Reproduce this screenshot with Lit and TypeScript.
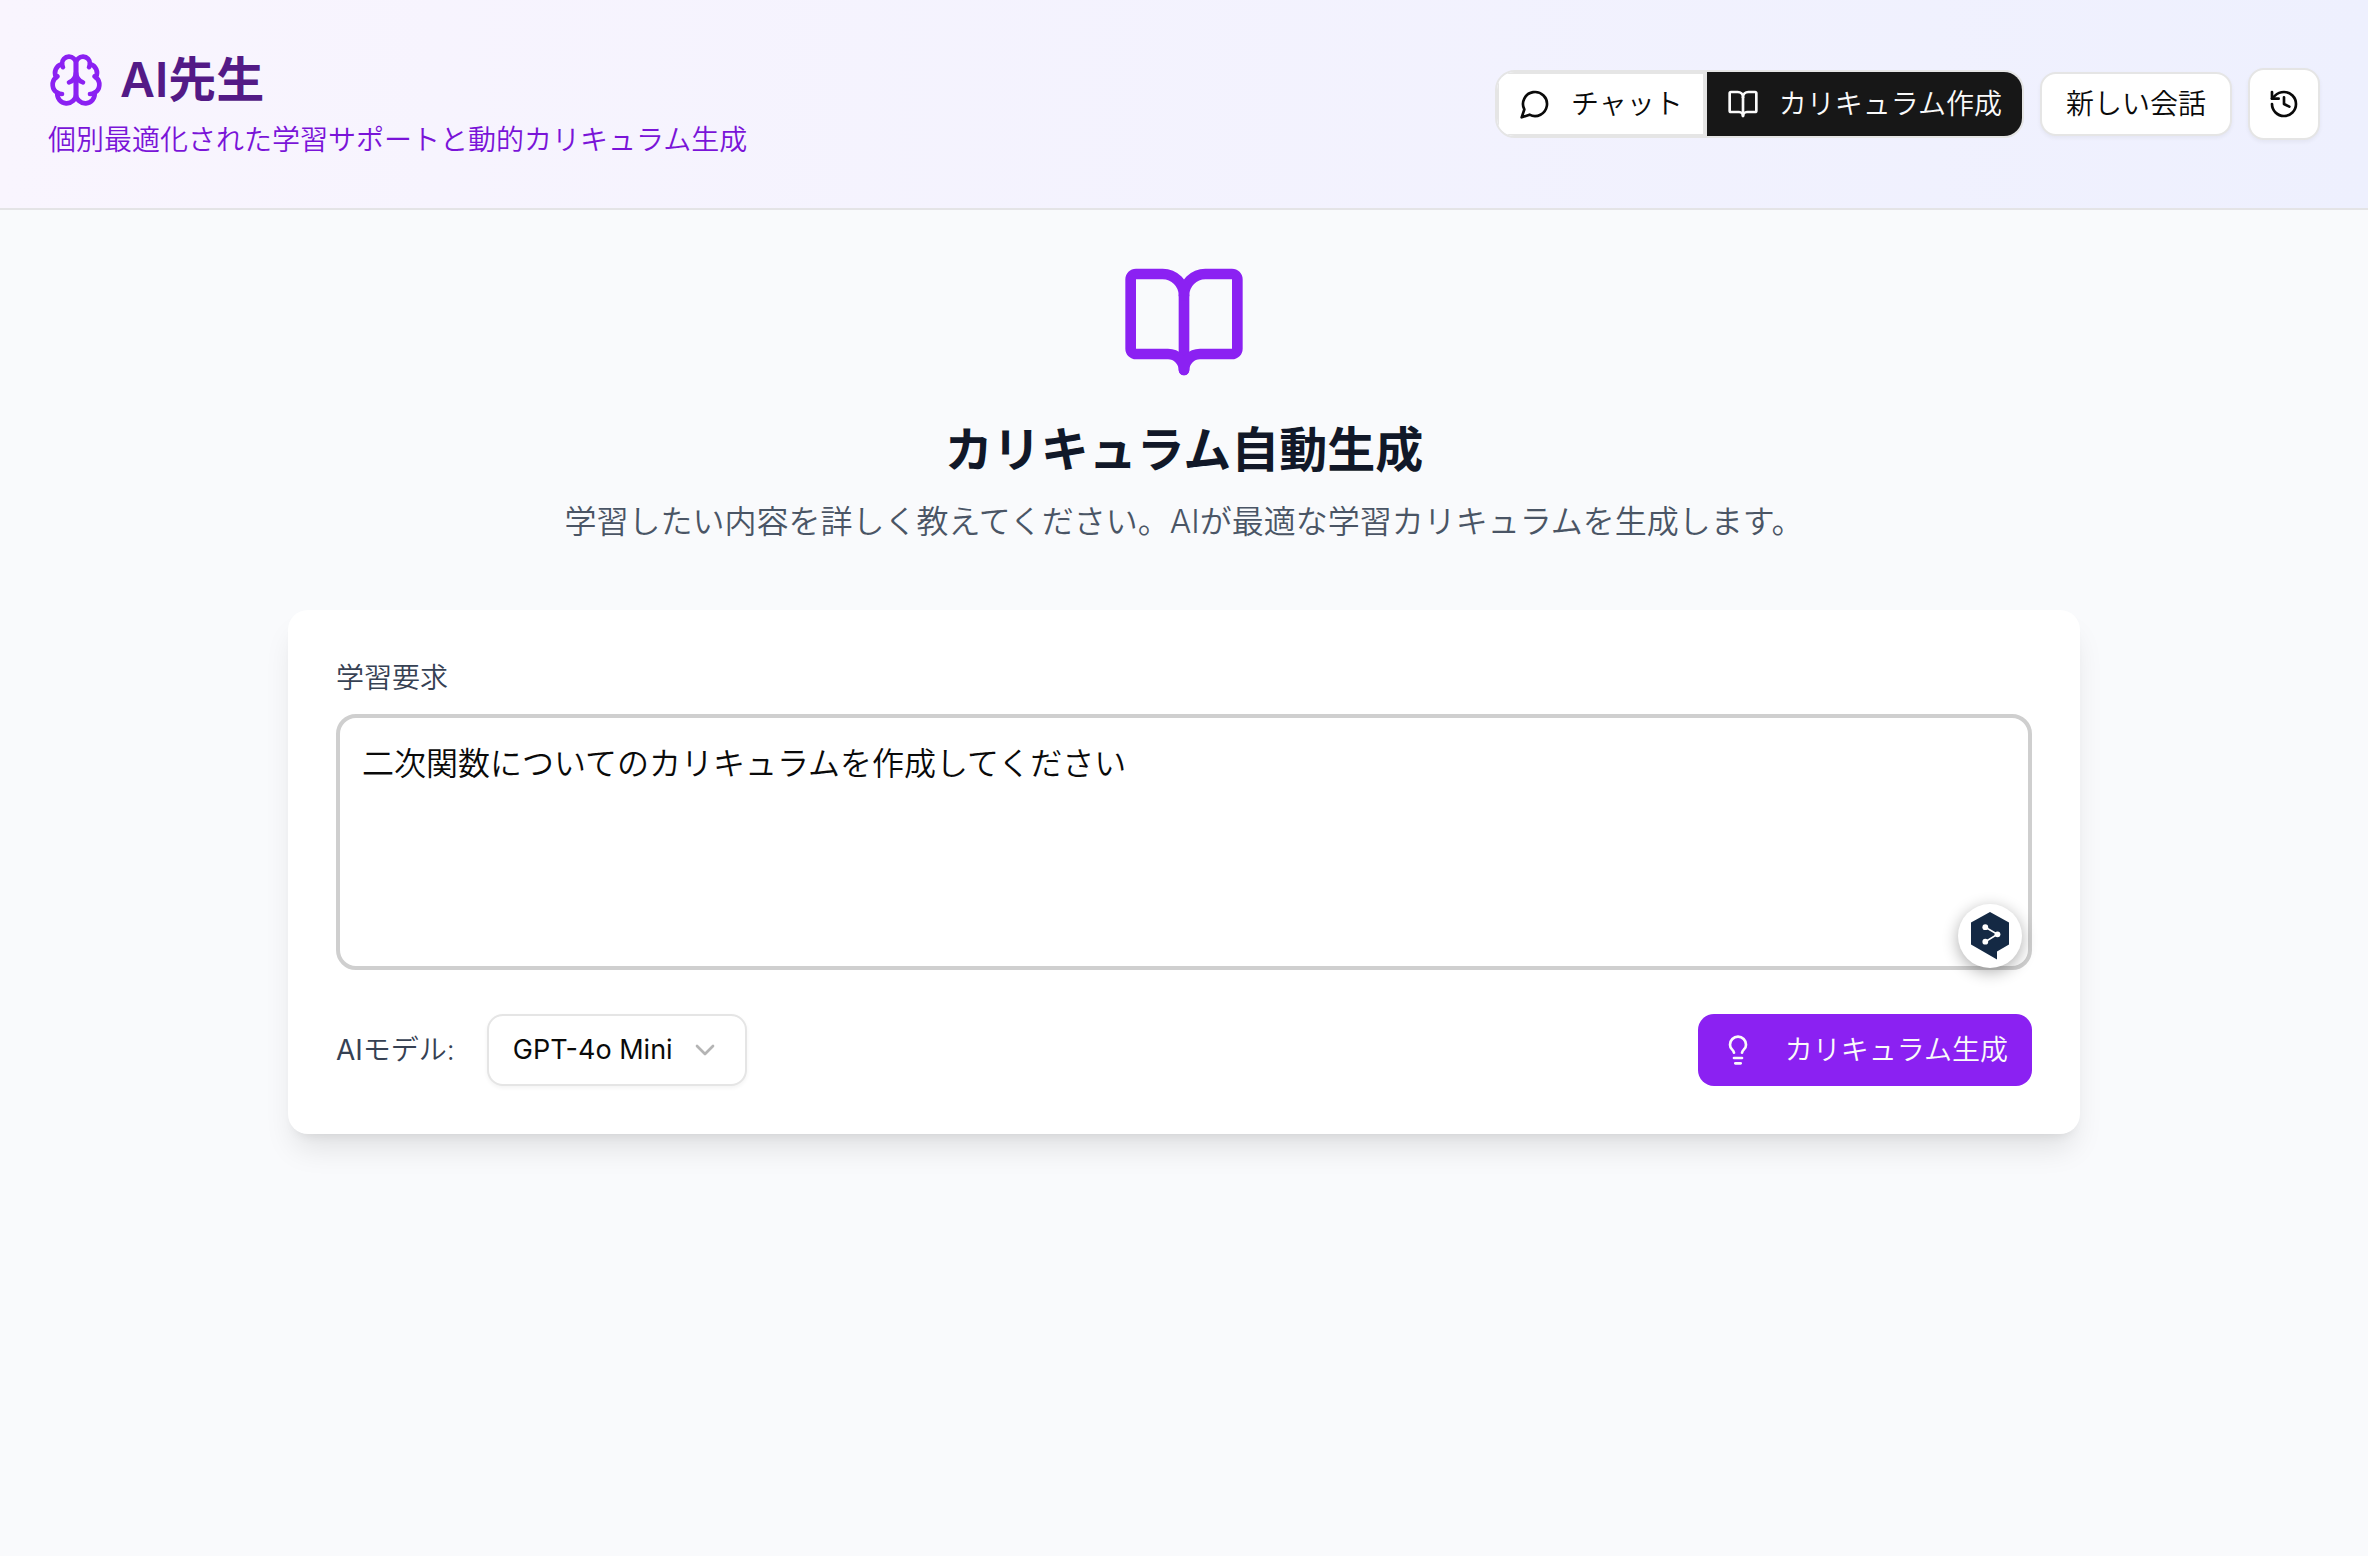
import { LitElement, html, css, svg } from "lit";
import { customElement, state } from "lit/decorators.js";

type View = "chat" | "curriculum";

const ICONS = {
  brain: svg`
    <path d="M12 5a3 3 0 1 0-5.997.125 4 4 0 0 0-2.526 5.77 4 4 0 0 0 .556 6.588A4 4 0 1 0 12 18Z"/>
    <path d="M12 5a3 3 0 1 1 5.997.125 4 4 0 0 1 2.526 5.77 4 4 0 0 1-.556 6.588A4 4 0 1 1 12 18Z"/>
    <path d="M15 13a4.5 4.5 0 0 1-3-4 4.5 4.5 0 0 1-3 4"/>
    <path d="M17.599 6.5a3 3 0 0 0 .399-1.375"/>
    <path d="M6.003 5.125A3 3 0 0 0 6.401 6.5"/>
    <path d="M3.477 10.896a4 4 0 0 1 .585-.396"/>
    <path d="M19.938 10.5a4 4 0 0 1 .585.396"/>
    <path d="M6 18a4 4 0 0 1-1.967-.516"/>
    <path d="M19.967 17.484A4 4 0 0 1 18 18"/>`,
  message: svg`<path d="M7.9 20A9 9 0 1 0 4 16.1L2 22Z"/>`,
  book: svg`
    <path d="M12 7v14"/>
    <path d="M3 18a1 1 0 0 1-1-1V4a1 1 0 0 1 1-1h5a4 4 0 0 1 4 4 4 4 0 0 1 4-4h5a1 1 0 0 1 1 1v13a1 1 0 0 1-1 1h-6a3 3 0 0 0-3 3 3 3 0 0 0-3-3z"/>`,
  history: svg`
    <path d="M3 12a9 9 0 1 0 9-9 9.75 9.75 0 0 0-6.74 2.74L3 8"/>
    <path d="M3 3v5h5"/>
    <path d="M12 7v5l4 2"/>`,
  chevron: svg`<path d="m6 9 6 6 6-6"/>`,
  bulb: svg`
    <path d="M15 14c.2-1 .7-1.7 1.5-2.5 1-.9 1.5-2.2 1.5-3.5A6 6 0 0 0 6 8c0 1 .2 2.2 1.5 3.5.7.7 1.3 1.5 1.5 2.5"/>
    <path d="M9 18h6"/>
    <path d="M10 22h4"/>`,
};

const icon = (name: keyof typeof ICONS, cls = "icon") => html`
  <svg class=${cls} viewBox="0 0 24 24" aria-hidden="true">${ICONS[name]}</svg>
`;

@customElement("app-root")
export class AppRoot extends LitElement {
  @state() private view: View = "curriculum";
  @state() private request = "二次関数についてのカリキュラムを作成してください";

  static styles = css`
    :host {
      display: flex;
      flex-direction: column;
      min-height: 100vh;
      box-sizing: border-box;
      background: #f9fafc;
      color: #0a0a0a;
      font-family: Inter, "Noto Sans CJK JP", sans-serif;
      font-size: 28px;
      line-height: 40px;
      font-weight: 350;
    }
    *, *::before, *::after { box-sizing: border-box; }
    h1, h2, p { margin: 0; }
    button, select, textarea { font: inherit; color: inherit; margin: 0; }
    button { cursor: pointer; white-space: nowrap; }

    .icon, .brand-icon, .hero-icon, .chevron {
      display: block;
      flex: none;
      width: 32px;
      height: 32px;
      fill: none;
      stroke: currentColor;
      stroke-width: 2;
      stroke-linecap: round;
      stroke-linejoin: round;
    }

    .header {
      display: flex;
      align-items: center;
      justify-content: space-between;
      gap: 32px;
      padding: 48px;
      border-bottom: 2px solid #e4e4e6;
      background: linear-gradient(to right, #f9f5fe, #eef0fe);
    }
    .brand { display: flex; flex-direction: column; gap: 8px; }
    .title {
      display: flex;
      align-items: center;
      gap: 16px;
      font-size: 48px;
      line-height: 64px;
      font-weight: 600;
      color: #531a86;
    }
    .brand-icon { width: 56px; height: 56px; color: #8b21f2; }
    .subtitle { color: #7a14d8; }

    .actions { display: flex; align-items: center; gap: 16px; }
    .tabs {
      display: flex;
      border: 2px solid #e5e5e5;
      border-radius: 20px;
      overflow: hidden;
    }
    .tab {
      display: flex;
      align-items: center;
      gap: 20px;
      height: 64px;
      padding: 0 20px;
      border: 2px solid #e5e5e5;
      background: #fff;
    }
    .tab.active {
      border-width: 0 0 0 2px;
      background: #171717;
      color: #fafafa;
    }
    .outline {
      display: flex;
      align-items: center;
      justify-content: center;
      height: 64px;
      padding: 0 24px;
      border: 2px solid #e5e5e5;
      border-radius: 16px;
      background: #fff;
      box-shadow: 0 2px 4px rgb(0 0 0 / 5%);
    }
    .square { width: 72px; height: 72px; padding: 0; }

    .main {
      display: flex;
      flex-direction: column;
      gap: 64px;
      width: 100%;
      max-width: 1888px;
      margin: 0 auto;
      padding: 48px;
    }
    .hero { display: flex; flex-direction: column; align-items: center; text-align: center; }
    .hero-icon { width: 128px; height: 128px; margin-bottom: 32px; color: #8b21f2; }
    .heading { font-size: 48px; line-height: 64px; font-weight: 600; color: #111828; margin-bottom: 16px; }
    .lead { font-size: 32px; line-height: 48px; color: #4a5565; }

    .card {
      padding: 48px;
      border-radius: 20px;
      background: #fff;
      box-shadow: 0 20px 30px -6px rgb(0 0 0 / 10%), 0 8px 12px -8px rgb(0 0 0 / 10%);
    }
    .label { color: #364153; }
    .latin { font-weight: 400; }
    .field { position: relative; margin: 16px 0 44px; }
    .textarea {
      display: block;
      width: 100%;
      height: 256px;
      padding: 22px;
      border: 4px solid #cfcfcf;
      border-radius: 20px;
      outline: none;
      resize: none;
      background: #fff;
      font-size: 32px;
      line-height: 48px;
    }
    .assist {
      position: absolute;
      right: 10px;
      bottom: 2px;
      width: 64px;
      height: 64px;
      padding: 0;
      border: 0;
      border-radius: 50%;
      background: #fff;
      box-shadow: 0 4px 16px rgb(0 0 0 / 32%);
    }
    .assist-mark { display: block; width: 64px; height: 64px; }

    .row { display: flex; align-items: center; justify-content: space-between; gap: 32px; }
    .model { display: flex; align-items: center; gap: 32px; }
    .select-wrap { display: grid; align-items: center; }
    .select-wrap > * { grid-area: 1 / 1; }
    .select {
      appearance: none;
      height: 72px;
      padding: 0 72px 0 24px;
      border: 2px solid #e5e5e5;
      border-radius: 16px;
      background: #fff;
      box-shadow: 0 2px 4px rgb(0 0 0 / 5%);
      font-size: 27px;
      font-weight: 400;
    }
    .chevron { justify-self: end; margin-right: 26px; color: #b4b4b4; pointer-events: none; }
    .primary {
      display: flex;
      align-items: center;
      gap: 31px;
      height: 72px;
      padding: 0 24px;
      border: 0;
      border-radius: 16px;
      background: #8b21f2;
      color: #fafafa;
    }
  `;

  private tab(view: View, glyph: keyof typeof ICONS, label: string) {
    const active = this.view === view;
    return html`
      <button class="tab ${active ? "active" : ""}" aria-pressed=${active} @click=${() => (this.view = view)}>
        ${icon(glyph)}<span>${label}</span>
      </button>
    `;
  }

  render() {
    return html`
      <header class="header">
        <div class="brand">
          <h1 class="title">${icon("brain", "brand-icon")}<span>AI先生</span></h1>
          <p class="subtitle">個別最適化された学習サポートと動的カリキュラム生成</p>
        </div>
        <div class="actions">
          <div class="tabs">
            ${this.tab("chat", "message", "チャット")}
            ${this.tab("curriculum", "book", "カリキュラム作成")}
          </div>
          <button class="outline">新しい会話</button>
          <button class="outline square">${icon("history")}</button>
        </div>
      </header>

      <main class="main">
        <section class="hero">
          ${icon("book", "hero-icon")}
          <h2 class="heading">カリキュラム自動生成</h2>
          <p class="lead">学習したい内容を詳しく教えてください。AIが最適な学習カリキュラムを生成します。</p>
        </section>

        <section class="card">
          <label class="label" for="request">学習要求</label>
          <div class="field">
            <textarea
              id="request"
              class="textarea"
              .value=${this.request}
              @input=${(e: Event) => (this.request = (e.target as HTMLTextAreaElement).value)}
            ></textarea>
            <button class="assist">
              <svg class="assist-mark" viewBox="0 0 64 64" aria-hidden="true">
                <path fill="#142944" d="M32 8 51 18.500V40.500L39 47.500V55.500L13 40.500V18.500Z"/>
                <path fill="none" stroke="#fff" stroke-width="1.600" d="M27.300 23.200 39.500 30.300 27.300 37.700"/>
                <circle cx="27.300" cy="23.200" r="2.900" fill="#fff"/>
                <circle cx="39.500" cy="30.300" r="2.900" fill="#fff"/>
                <circle cx="27.300" cy="37.700" r="2.900" fill="#fff"/>
              </svg>
            </button>
          </div>
          <div class="row">
            <div class="model">
              <label class="label" for="model"><span class="latin">AI</span>モデル:</label>
              <div class="select-wrap">
                <select id="model" class="select"><option>GPT-4o Mini</option></select>
                ${icon("chevron", "chevron")}
              </div>
            </div>
            <button class="primary">${icon("bulb")}<span>カリキュラム生成</span></button>
          </div>
        </section>
      </main>
    `;
  }
}
